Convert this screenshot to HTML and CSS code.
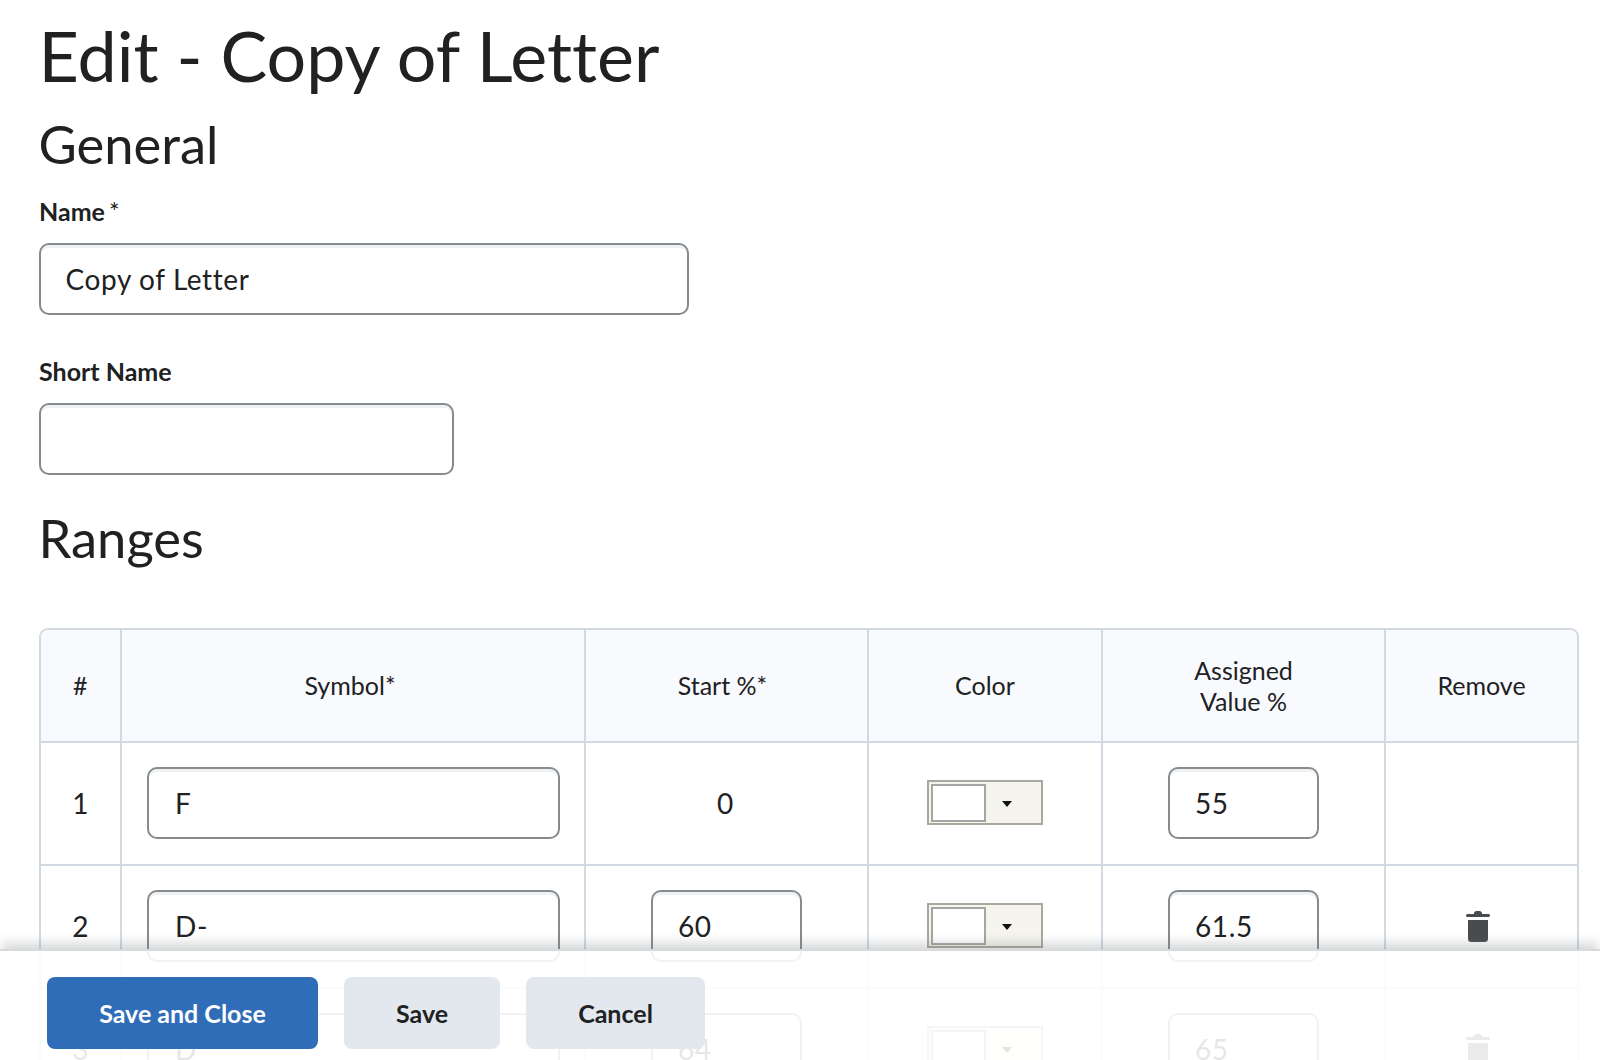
FILE: index.html
```html
<!DOCTYPE html>
<html lang="en">
<head>
    <meta charset="UTF-8">
    <meta name="viewport" content="width=device-width, initial-scale=1.0">
    <title>Edit - Copy of Letter</title>
    <link rel="stylesheet" href="styles.css">
</head>
<body>
    <div class="page">
        <h1>Edit - Copy of Letter</h1>
        <h2 class="general-title">General</h2>

        <div class="field name-field">
            <label for="name">Name <span class="required">*</span></label>
            <input type="text" id="name" class="text-input" value="Copy of Letter">
        </div>
        <div class="field short-field">
            <label for="shortName">Short Name</label>
            <input type="text" id="shortName" class="text-input">
        </div>

        <h2 class="ranges-title">Ranges</h2>

        <table class="ranges">
            <colgroup>
                <col class="col-num">
                <col class="col-symbol">
                <col class="col-start">
                <col class="col-color">
                <col class="col-value">
                <col class="col-remove">
            </colgroup>
            <thead>
                <tr>
                    <th>#</th>
                    <th class="th-symbol">Symbol*</th>
                    <th class="th-start">Start %*</th>
                    <th>Color</th>
                    <th>Assigned<br>Value %</th>
                    <th>Remove</th>
                </tr>
            </thead>
            <tbody>
                <tr>
                    <td>1</td>
                    <td><input type="text" class="text-input symbol-input" value="F"></td>
                    <td class="start-zero">0</td>
                    <td>
                        <div class="color-picker"><span class="swatch"></span><span class="caret"></span></div>
                    </td>
                    <td><input type="text" class="text-input small-input" value="55"></td>
                    <td></td>
                </tr>
                <tr>
                    <td>2</td>
                    <td><input type="text" class="text-input symbol-input" value="D-"></td>
                    <td><input type="text" class="text-input small-input" value="60"></td>
                    <td>
                        <div class="color-picker"><span class="swatch"></span><span class="caret"></span></div>
                    </td>
                    <td><input type="text" class="text-input small-input" value="61.5"></td>
                    <td>
                        <svg class="trash" viewBox="0 0 24 32"><path d="M8 3.5C8 2 9 1 10.500 1h3C15 1 16 2 16 3.500V4h6.500a1.500 1.500 0 0 1 0 3h-21a1.500 1.500 0 0 1 0-3H8zM2 10h20v19c0 1.700-1.300 3-3 3H5c-1.700 0-3-1.300-3-3z"/></svg>
                    </td>
                </tr>
                <tr>
                    <td>3</td>
                    <td><input type="text" class="text-input symbol-input" value="D"></td>
                    <td><input type="text" class="text-input small-input" value="64"></td>
                    <td>
                        <div class="color-picker"><span class="swatch"></span><span class="caret"></span></div>
                    </td>
                    <td><input type="text" class="text-input small-input" value="65"></td>
                    <td>
                        <svg class="trash" viewBox="0 0 24 32"><path d="M8 3.5C8 2 9 1 10.500 1h3C15 1 16 2 16 3.500V4h6.500a1.500 1.500 0 0 1 0 3h-21a1.500 1.500 0 0 1 0-3H8zM2 10h20v19c0 1.700-1.300 3-3 3H5c-1.700 0-3-1.300-3-3z"/></svg>
                    </td>
                </tr>
            </tbody>
        </table>
    </div>

    <footer class="actions">
        <button class="btn btn-primary">Save and Close</button>
        <button class="btn">Save</button>
        <button class="btn btn-cancel">Cancel</button>
    </footer>
</body>
</html>
```

FILE: styles.css
```css
/* Basic reset and body styling */
* {
    box-sizing: border-box;
    margin: 0;
    padding: 0;
}

html, body {
    height: 100%;
    overflow: hidden;
}

body {
    font-family: Lato, "Open Sans", sans-serif;
    font-variant-ligatures: none;
    color: #202122;
    background: #fff;
}

.page {
    padding: 10px 21px 0 38.5px;
}

/* Headings */
h1 {
    font-size: 70px;
    font-weight: 400;
    line-height: 90px;
}

h2 {
    font-size: 52.500px;
    font-weight: 400;
    line-height: 62px;
}

.general-title {
    margin-top: 13px;
}

.ranges-title {
    margin-top: 32px;
}

/* Form fields */
.field label {
    display: block;
    margin-left: 0.5px;
    font-size: 25px;
    font-weight: 700;
    line-height: 30px;
    margin-bottom: 17px;
}

.required {
    margin-left: -2px;
    font-weight: 400;
}

.name-field {
    margin-top: 21px;
    width: 650.500px;
}

.short-field {
    margin-top: 41px;
    width: 415.500px;
}

.text-input {
    display: block;
    width: 100%;
    height: 72px;
    padding: 0 25px;
    font-family: inherit;
    font-size: 28px;
    letter-spacing: 0.6px;
    color: #202122;
    background: #fff;
    border: 2px solid #858b8f;
    border-radius: 10px;
    box-shadow: inset 0 3px 0 0 rgba(177, 185, 190, 0.2);
    outline: none;
}

/* Ranges table */
.ranges {
    width: 1540.500px;
    margin-top: 59px;
    table-layout: fixed;
    border-collapse: separate;
    border-spacing: 0;
    border: 2px solid #d3d9e3;
    border-bottom: none;
    border-radius: 9px 9px 0 0;
    font-size: 25px;
}

.col-num { width: 81.500px; }
.col-symbol { width: 464px; }
.col-start { width: 283px; }
.col-color { width: 234px; }
.col-value { width: 283px; }
.col-remove { width: 191px; }

.ranges th {
    height: 113px;
    font-weight: 400;
    line-height: 31px;
    text-align: center;
    background: #f9fafe;
    border-bottom: 2px solid #d3d9e3;
    border-right: 2px solid #d3d9e3;
}

.ranges .th-symbol {
    padding-right: 6px;
}

.ranges .th-start {
    padding-right: 8px;
}

.ranges th:first-child {
    border-top-left-radius: 8px;
}

.ranges th:last-child {
    border-right: none;
    border-top-right-radius: 8px;
}

.ranges td {
    height: 123px;
    padding-bottom: 2px;
    font-size: 28px;
    text-align: center;
    vertical-align: middle;
    border-bottom: 2px solid #d3d9e3;
    border-right: 2px solid #d3d9e3;
}

.ranges td:last-child {
    border-right: none;
}

.ranges .start-zero {
    padding-right: 3px;
}

.symbol-input {
    width: 412.500px;
    margin-left: 25px;
    padding-left: 26px;
}

.small-input {
    width: 151px;
    margin: 0 auto;
}

/* Color picker */
.color-picker {
    display: flex;
    align-items: center;
    width: 116px;
    height: 45px;
    margin: 0 auto;
    padding-left: 2px;
    background: #f5f5ee;
    border: 2px solid #a8a89c;
}

.swatch {
    width: 55px;
    height: 38px;
    background: #fff;
    border: 2px solid #a5a5a5;
}

.caret {
    width: 0;
    height: 0;
    margin: 3px 0 0 16px;
    border-left: 5px solid transparent;
    border-right: 5px solid transparent;
    border-top: 6px solid #111;
}

.trash {
    display: block;
    width: 24px;
    height: 32px;
    margin-left: 80px;
    fill: #494c4e;
}

/* Sticky button bar */
.actions {
    position: absolute;
    left: 0;
    right: 0;
    bottom: 0;
    height: 111px;
    display: flex;
    gap: 26px;
    padding: 26px 0 0 47px;
    background: rgba(255, 255, 255, 0.89);
    border-top: 2px solid #d8dadc;
    box-shadow: 0 -8px 10px -2px rgba(120, 125, 130, 0.3);
}

.btn {
    height: 72px;
    width: 156px;
    font-family: inherit;
    font-size: 25px;
    font-weight: 700;
    color: #202122;
    background: #e3e7ee;
    border: none;
    border-radius: 8px;
}

.btn-primary {
    width: 271px;
    color: #fff;
    background: #2f6db8;
}

.btn-cancel {
    width: 179px;
}
```
